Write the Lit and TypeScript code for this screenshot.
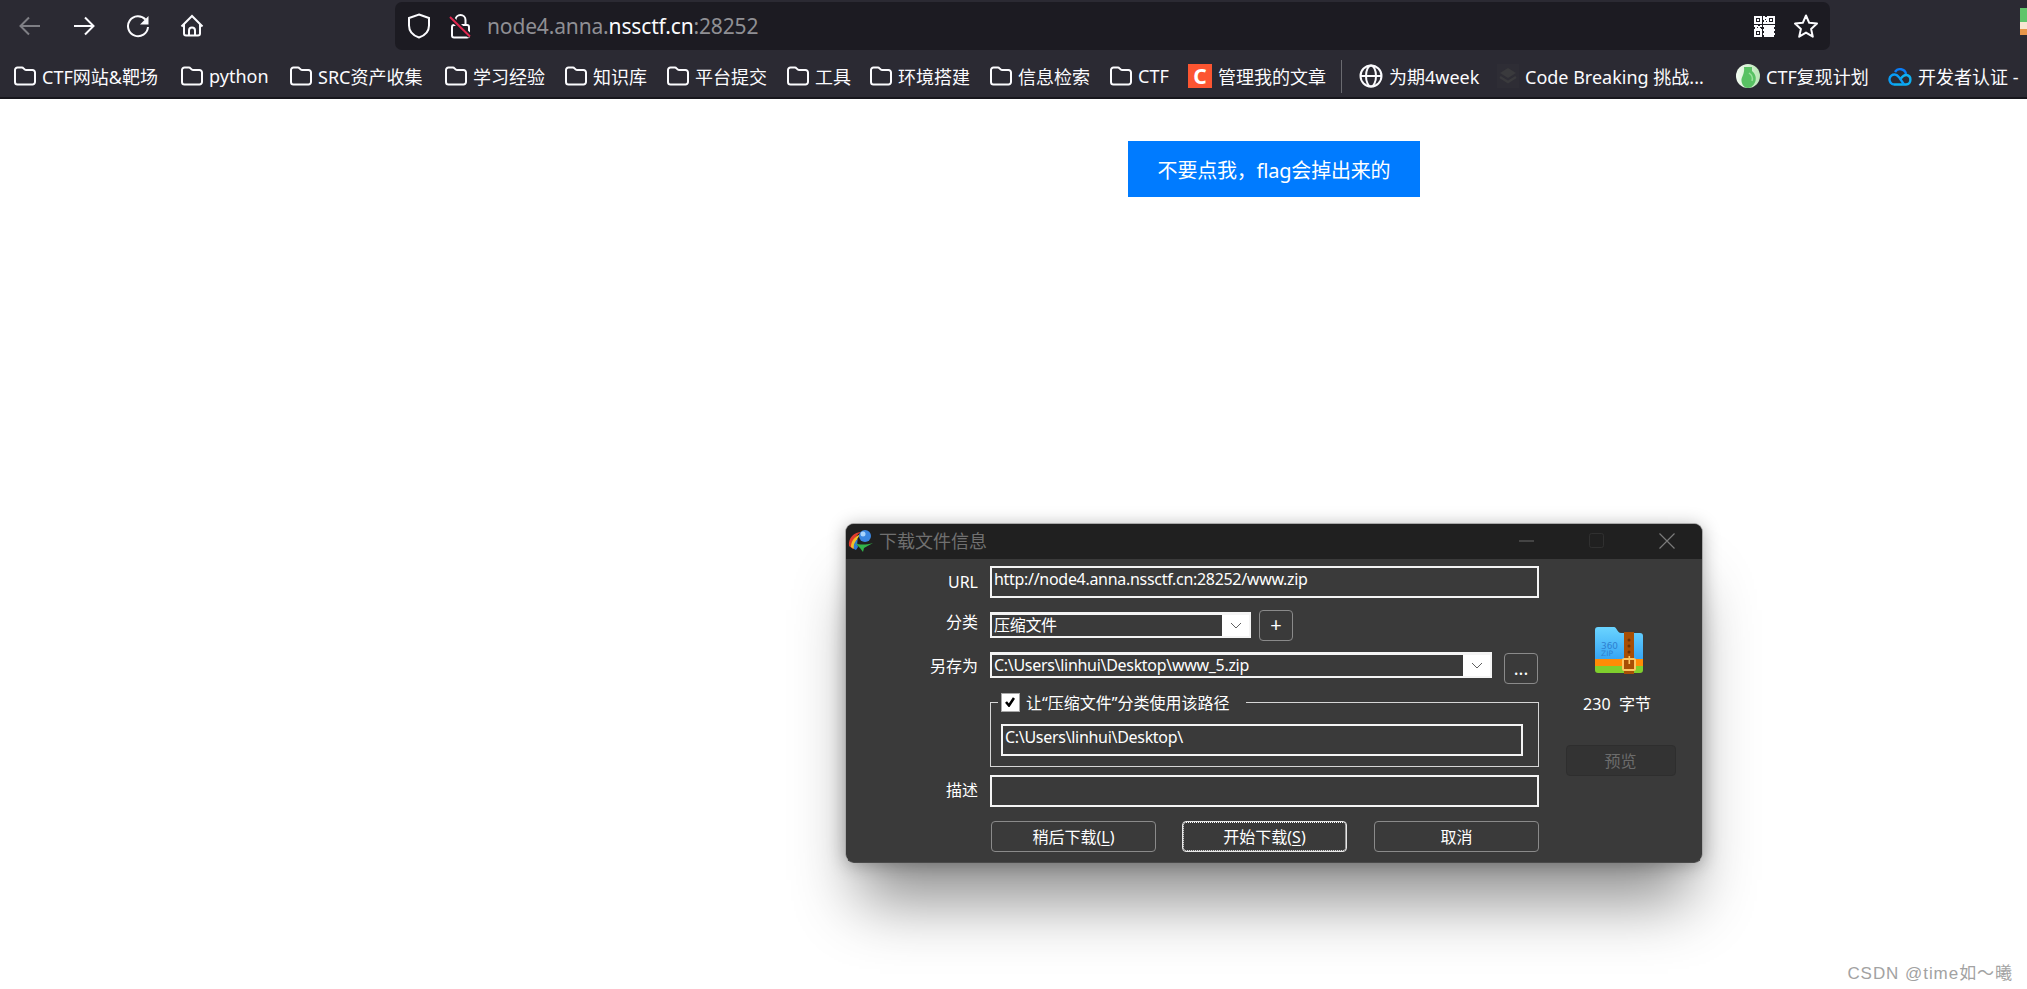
import { LitElement, html, css, svg } from "lit";
import { customElement } from "lit/decorators.js";

type Bm = { label: string; icon: string; w: number };
const BOOKMARKS: Bm[] = [
  { label: "CTF网站&靶场", icon: "folder", w: 167 },
  { label: "python", icon: "folder", w: 109 },
  { label: "SRC资产收集", icon: "folder", w: 155 },
  { label: "学习经验", icon: "folder", w: 120 },
  { label: "知识库", icon: "folder", w: 102 },
  { label: "平台提交", icon: "folder", w: 120 },
  { label: "工具", icon: "folder", w: 83 },
  { label: "环境搭建", icon: "folder", w: 120 },
  { label: "信息检索", icon: "folder", w: 120 },
  { label: "CTF", icon: "folder", w: 78 },
  { label: "管理我的文章", icon: "csdn", w: 153 },
  { label: "为期4week", icon: "globe", w: 138 },
  { label: "Code Breaking 挑战...", icon: "code", w: 239 },
  { label: "CTF复现计划", icon: "jar", w: 152 },
  { label: "开发者认证 -", icon: "cloud", w: 138 },
];

const ICONS: Record<string, unknown> = {
  folder: svg`<svg class="ic" viewBox="0 0 22 20" width="22" height="20" fill="none" stroke="#fbfbfe" stroke-width="2"><path d="M1 4a2.5 2.5 0 0 1 2.5-2.5H8c1.6 0 2 2.5 4 2.5h6.5A2.5 2.5 0 0 1 21 6.5v9.500a2.500 2.500 0 0 1-2.500 2.500h-15A2.500 2.500 0 0 1 1 16z"/></svg>`,
  csdn: html`<span class="csdn">C</span>`,
  globe: svg`<svg class="ic" viewBox="0 0 24 24" width="24" height="24" fill="none" stroke="#fbfbfe" stroke-width="2"><circle cx="12" cy="12" r="10.500"/><ellipse cx="12" cy="12" rx="5" ry="10.500"/><path d="M1.500 12h21"/></svg>`,
  code: svg`<svg class="ic" viewBox="0 0 22 24" width="22" height="24"><rect width="22" height="24" fill="#2e2d35"/><path d="M11 4l8 5-8 5-8-5z" fill="#3a3a3d"/><path d="M3 13l8 5 8-5" fill="none" stroke="#3a3a3d" stroke-width="2.500"/></svg>`,
  jar: svg`<svg class="ic" viewBox="0 0 24 24" width="24" height="24"><defs><linearGradient id="jg" x1="0" y1="0" x2="1" y2="0"><stop offset="0" stop-color="#f3fbf2"/><stop offset="1" stop-color="#b8e6b4"/></linearGradient></defs><circle cx="12" cy="12" r="12" fill="url(#jg)"/><path d="M8 3h8v4c3 2.500 4.500 6 3.500 10-1 3.500-4 7-7.500 7s-6-3-6.500-7C5 13 9 10 8 3z" fill="#58c263"/><path d="M13 9c3 2 4 5 3 8" stroke="#9be29c" stroke-width="1.500" fill="none"/></svg>`,
  cloud: svg`<svg class="ic" viewBox="0 0 24 20" width="24" height="20" fill="none" stroke-width="2.400"><path d="M7 6a6 6 0 0 1 11 2" stroke="#0a7cf5"/><path d="M6 18.500h12a4.800 4.800 0 0 0 .5-9.500c-3-.3-4.500 2-6.500 4.500" stroke="#0fb0f0"/><path d="M6 18.500a5 5 0 1 1 1-10c2.500 0 3.500 2 5 4 1.200 1.700 2.500 4 4 6" stroke="#0a9df5"/></svg>`,
};

@customElement("app-root")
export class AppRoot extends LitElement {
  static styles = css`
    :host {
      display: block;
      position: relative;
      width: 2027px;
      height: 989px;
      overflow: hidden;
      background: #fff;
      font-family: "Noto Sans", "Noto Sans CJK SC", sans-serif;
    }
    .toolbar {
      height: 48px;
      padding-top: 2px;
      padding-left: 3px;
      background: #2b2a33;
      display: flex;
      align-items: stretch;
    }
    .nav {
      width: 54px;
      display: flex;
      align-items: center;
      justify-content: center;
    }
    .urlbar {
      margin-left: 176px;
      width: 1435px;
      box-sizing: border-box;
      background: #1c1b22;
      border-radius: 7px;
      display: flex;
      align-items: center;
      padding: 0 12px;
      color: #fbfbfe;
    }
    .url {
      margin-left: 16px;
      font-size: 21px;
      letter-spacing: -0.15px;
      color: #8f8f94;
      flex: 1;
      white-space: nowrap;
    }
    .url b {
      font-weight: 400;
      color: #fbfbfe;
    }
    .lock {
      margin-left: 18px;
    }
    .qr {
      margin-right: 19px;
    }
    .avatar {
      margin-left: auto;
      align-self: flex-start;
      margin-top: 6px;
    }
    .bookmarks {
      height: 42px;
      padding: 5px 0 0 14px;
      background: #2b2a33;
      border-bottom: 2px solid #17161c;
      display: flex;
      align-items: center;
      color: #fbfbfe;
      font-size: 18px;
      white-space: nowrap;
      overflow: hidden;
    }
    .bm {
      display: flex;
      align-items: center;
      gap: 6px;
      flex: none;
    }
    .ic {
      flex: none;
    }
    .csdn {
      width: 24px;
      height: 24px;
      background: #fc5531;
      color: #fff;
      font: 700 21px/24px "Noto Sans", sans-serif;
      text-align: center;
      flex: none;
    }
    .sep {
      width: 1px;
      height: 33px;
      background: #6a6a70;
      margin-right: 17px;
      flex: none;
    }
    .page {
      padding: 42px 0 0 1128px;
    }
    .cta {
      display: block;
      width: 292px;
      height: 56px;
      border: 0;
      padding: 0;
      background: #007bff;
      color: #fff;
      font: 400 20px "Noto Sans", "Noto Sans CJK SC", sans-serif;
      letter-spacing: -0.2px;
    }
    .dialog {
      position: absolute;
      left: 845px;
      top: 523px;
      width: 858px;
      height: 340px;
      box-sizing: border-box;
      border: 1px solid #a9a9a9;
      border-bottom-color: #4a4a4a;
      border-radius: 9px;
      overflow: hidden;
      background: #3a3a3a;
      color: #fff;
      font-size: 16px;
      display: flex;
      flex-direction: column;
    }
    .shadow {
      position: absolute;
      left: 845px;
      top: 523px;
      width: 858px;
      height: 340px;
      border-radius: 9px;
      box-shadow: 0 52px 60px -14px rgba(0, 0, 0, 0.44), 0 2px 18px rgba(0, 0, 0, 0.28);
    }
    .title {
      height: 35px;
      box-sizing: border-box;
      padding-bottom: 2px;
      flex: none;
      background: #202020;
      display: flex;
      align-items: center;
      color: #707070;
      font-size: 18px;
    }
    .title .logo {
      margin: 0 5px 0 2px;
    }
    .title .name {
      flex: 1;
      margin-bottom: 1px;
    }
    .wc {
      width: 70px;
      display: flex;
      align-items: center;
      justify-content: center;
    }
    .body {
      flex: 1;
      display: flex;
    }
    .form {
      width: 693px;
      flex: none;
      padding-top: 7px;
      display: flex;
      flex-direction: column;
    }
    .row {
      display: grid;
      grid-template-columns: 132px 1fr;
      column-gap: 12px;
      align-items: start;
    }
    .lab {
      text-align: right;
      line-height: 32px;
    }
    .lab.up {
      line-height: 26px;
    }
    .lab.nudge {
      padding-top: 1px;
    }
    .lab.lift {
      margin-top: -1px;
    }
    .mt12 { margin-top: 12px; }
    .mt11 { margin-top: 11px; }
    .mt8 { margin-top: 8px; }
    .mt14 { margin-top: 14px; }
    .input {
      box-sizing: border-box;
      height: 32px;
      border: 2px solid #f4f4f4;
      padding: 0 2px;
      line-height: 22px;
      font-size: 16px;
      white-space: nowrap;
      letter-spacing: -0.3px;
    }
    .ctl {
      display: flex;
      align-items: flex-start;
    }
    .select {
      box-sizing: border-box;
      display: flex;
      background: #fff;
      border: 2px solid #f4f4f4;
      border-top-width: 3px;
      flex: none;
    }
    .select .val {
      flex: 1;
      background: #3a3a3a;
      padding-left: 2px;
      line-height: 21px;
      white-space: nowrap;
      letter-spacing: -0.3px;
    }
    .select .arrow {
      display: flex;
      align-items: center;
      justify-content: center;
      width: 27px;
    }
    .cat { width: 261px; height: 26px; margin-top: 2px; }
    .save { width: 502px; height: 26px; }
    .btn {
      box-sizing: border-box;
      background: #3a3a3a;
      border: 1px solid #8a8a8a;
      border-radius: 4px;
      color: #fff;
      font: 400 16px "Noto Sans", "Noto Sans CJK SC", sans-serif;
      padding: 0 0 2px;
      display: block;
      height: 31px;
    }
    .small { width: 34px; }
    .plus { margin-left: 8px; font-size: 20px; line-height: 26px; }
    .dots { margin-left: 12px; margin-top: 1px; line-height: 22px; font-size: 18px; }
    .group {
      margin-top: 10px;
      height: 65px;
      box-sizing: border-box;
      border: 1px solid #d6d6d6;
      position: relative;
      padding: 21px 15px 0 10px;
    }
    .legend {
      position: absolute;
      left: 7px;
      top: -11px;
      height: 20px;
      background: #3a3a3a;
      padding: 0 16px 0 3px;
      display: flex;
      align-items: center;
      gap: 6px;
      white-space: nowrap;
      font-size: 16px;
    }
    .check {
      width: 19px;
      height: 19px;
      background: #fff;
      border: 1px solid #a8a8a8;
      box-sizing: border-box;
      flex: none;
      display: flex;
      align-items: center;
      padding-left: 3px;
    }
    .actions {
      padding-left: 145px;
      display: flex;
      gap: 26px;
    }
    .actions .btn {
      width: 165px;
    }
    .actions .btn:nth-child(3) {
      margin-left: 1px;
    }
    .actions u {
      text-underline-offset: 2px;
    }
    .focus {
      border-color: #e8e8e8;
      outline: 1px dotted #fff;
      outline-offset: -2px;
    }
    .side {
      flex: 1;
      display: flex;
      flex-direction: column;
      align-items: center;
      padding-top: 68px;
    }
    .side .zip {
      margin-right: 4px;
    }
    .size {
      margin-top: 19px;
      margin-right: 7px;
      line-height: 22px;
      white-space: pre;
    }
    .preview {
      margin-top: 30px;
      width: 110px;
      height: 31px;
      background: #333;
      border-color: #2e2e2e;
      color: #6c6c6c;
    }
    .mark {
      position: absolute;
      right: 14px;
      top: 959px;
      color: #a2a2a2;
      font: 400 17px "Liberation Sans", "Noto Sans CJK SC", sans-serif;
      letter-spacing: 0.95px;
      white-space: nowrap;
    }
  `;

  private qr() {
    const cells = [
      [9, 0], [11, 1], [9, 2], [12, 3], [10, 4], [9, 6], [11, 6],
      [0, 9], [2, 9], [4, 10], [6, 9], [1, 11], [5, 12], [3, 12],
      [9, 9], [11, 9], [13, 9], [15, 9], [17, 9], [19, 9],
      [10, 11], [12, 11], [14, 11], [16, 11], [18, 11],
      [9, 13], [11, 13], [13, 13], [15, 13], [17, 13], [19, 13],
      [10, 15], [12, 15], [14, 15], [16, 15], [18, 15],
      [9, 17], [11, 17], [13, 17], [15, 17], [17, 17], [19, 17],
      [10, 19], [12, 19], [14, 19], [16, 19], [18, 19],
    ];
    return svg`<svg class="qr" viewBox="0 0 21 21" width="21" height="21" fill="#fbfbfe">
      ${[[0, 0], [13, 0], [0, 13]].map(
        ([x, y]) => svg`<path fill-rule="evenodd" d="M${x} ${y}h8v8h-8zM${x + 2} ${y + 2}v4h4v-4z"/><rect x="${x + 3}" y="${y + 3}" width="2" height="2"/>`
      )}
      ${cells.map(([x, y]) => svg`<rect x="${x}" y="${y}" width="2" height="2"/>`)}
    </svg>`;
  }

  render() {
    return html`
      <div class="toolbar">
        <div class="nav">
          <svg viewBox="0 0 24 24" width="24" height="24" fill="none" stroke="#7f7f85" stroke-width="2"><path d="M22 12H3M11 3.500 2.500 12l8.500 8.500"/></svg>
        </div>
        <div class="nav">
          <svg viewBox="0 0 24 24" width="24" height="24" fill="none" stroke="#fbfbfe" stroke-width="2"><path d="M2 12h19M13 3.500l8.500 8.500-8.500 8.500"/></svg>
        </div>
        <div class="nav">
          <svg viewBox="0 0 24 24" width="24" height="24" fill="none" stroke="#fbfbfe" stroke-width="2"><path d="M19.500 5.500A10 10 0 1 0 22 13"/><path d="M22.500 2v8.500H14z" fill="#fbfbfe" stroke="none"/></svg>
        </div>
        <div class="nav">
          <svg viewBox="0 0 24 24" width="24" height="24" fill="none" stroke="#fbfbfe" stroke-width="2"><path d="M1.500 12.500 12 2l10.500 10.500"/><path d="M4 10v9.500a2 2 0 0 0 2 2h12a2 2 0 0 0 2-2V10"/><path d="M9 21.500v-5a3 3 0 0 1 6 0v5"/></svg>
        </div>
        <div class="urlbar">
          <svg viewBox="0 0 24 26" width="24" height="26" fill="none" stroke="#fbfbfe" stroke-width="2"><path d="M12 1.500 22 5v7.500c0 6-4 10-10 12-6-2-10-6-10-12V5z"/></svg>
          <svg class="lock" viewBox="0 0 22 26" width="22" height="26" fill="none" stroke="#fbfbfe" stroke-width="2"><path d="M6.500 12V7a5 5 0 0 1 10 0v5"/><rect x="3" y="12" width="17" height="12.500" rx="2"/><path d="M0 3l21 20" stroke="#1c1b22" stroke-width="5"/><path d="M1 4l20 19.500" stroke="#e22850" stroke-width="2"/></svg>
          <div class="url">node4.anna.<b>nssctf.cn</b>:28252</div>
          ${this.qr()}
          <svg viewBox="0 0 24 24" width="24" height="24" fill="none" stroke="#fbfbfe" stroke-width="2" stroke-linejoin="round"><path d="M12 1.500l3.200 7.300 7.800.8-5.900 5.300 1.700 7.800L12 18.600l-6.800 4.100 1.700-7.800L1 9.600l7.800-.8z"/></svg>
        </div>
        <svg class="avatar" viewBox="0 0 7 27" width="7" height="27"><rect width="7" height="14" fill="#5fc56b"/><rect y="14" width="7" height="7" fill="#f7e6d2"/><rect y="21" width="7" height="6" fill="#e8964a"/></svg>
      </div>
      <div class="bookmarks">
        ${BOOKMARKS.map(
          (b) => html`
            ${b.icon === "globe" ? html`<div class="sep"></div>` : ""}
            <div class="bm" style="width:${b.w}px">
              ${ICONS[b.icon]}<span class="t">${b.label}</span>
            </div>
          `
        )}
      </div>
      <div class="page">
        <button class="cta">不要点我，flag会掉出来的</button>
      </div>

      <div class="shadow"></div>
      <div class="dialog">
        <div class="title">
          <svg class="logo" viewBox="0 0 26 24" width="26" height="24">
            <path d="M1 17C0 9 6 3 14 3 9 5 6 9 6 14l-1 6z" fill="#e23b2c"/>
            <path d="M3 18C3 12 7 7 13 5c-3 3-5 6-5 10l-2 5z" fill="#f0c02a"/>
            <path d="M6 20c-1-4 1-8 4-10-1 3-1 5 0 8l-2 3z" fill="#2f7ad6"/>
            <circle cx="17" cy="7" r="6" fill="#3a86e0"/>
            <circle cx="15" cy="5" r="2.500" fill="#a9d4fb"/>
            <path d="M7 14c4 2 11 2 18 0l-9 5-1 4-3-4z" fill="#32b44a"/>
          </svg>
          <span class="name">下载文件信息</span>
          <div class="wc"><svg width="16" height="16"><path d="M0 8h15" stroke="#686868"/></svg></div>
          <div class="wc"><svg width="16" height="16" fill="none"><rect x=".5" y=".5" width="14" height="14" rx="2" stroke="#303030"/></svg></div>
          <div class="wc"><svg width="16" height="16" fill="none" stroke="#7a7a7a" stroke-width="1.200"><path d="M.5.5l15 15M15.500.5l-15 15"/></svg></div>
        </div>
        <div class="body">
          <div class="form">
            <div class="row">
              <div class="lab">URL</div>
              <div class="input">http://node4.anna.nssctf.cn:28252/www.zip</div>
            </div>
            <div class="row mt12">
              <div class="lab up lift">分类</div>
              <div class="ctl">
                <div class="select cat">
                  <div class="val">压缩文件</div>
                  <div class="arrow"><svg width="12" height="8" fill="none" stroke="#606060"><path d="M1 1l5 5 5-5"/></svg></div>
                </div>
                <button class="btn small plus">+</button>
              </div>
            </div>
            <div class="row mt11">
              <div class="lab up nudge">另存为</div>
              <div class="ctl">
                <div class="select save">
                  <div class="val">C:\\Users\\linhui\\Desktop\\www_5.zip</div>
                  <div class="arrow"><svg width="12" height="8" fill="none" stroke="#606060"><path d="M1 1l5 5 5-5"/></svg></div>
                </div>
                <button class="btn small dots">...</button>
              </div>
            </div>
            <div class="row mt8">
              <div></div>
              <div class="group">
                <div class="legend">
                  <div class="check"><svg width="10" height="10"><path d="M1 5l3 3.500L9 1" fill="none" stroke="#000" stroke-width="2.600"/></svg></div>
                  <span>让“压缩文件”分类使用该路径</span>
                </div>
                <div class="input">C:\\Users\\linhui\\Desktop\\</div>
              </div>
            </div>
            <div class="row mt8">
              <div class="lab lift">描述</div>
              <div class="input"></div>
            </div>
            <div class="actions mt14">
              <button class="btn">稍后下载(<u>L</u>)</button>
              <button class="btn focus">开始下载(<u>S</u>)</button>
              <button class="btn">取消</button>
            </div>
          </div>
          <div class="side">
            <svg class="zip" viewBox="0 0 48 47" width="48" height="47">
              <defs>
                <linearGradient id="zb" x1="0" y1="0" x2="0" y2="1"><stop offset="0" stop-color="#6ad4ff"/><stop offset="1" stop-color="#35a4f4"/></linearGradient>
              </defs>
              <path d="M0 3a3 3 0 0 1 3-3h16c3 0 3 6 7 6h19a3 3 0 0 1 3 3v24H0z" fill="url(#zb)"/>
              <rect y="32" width="48" height="8" fill="#ff8c06"/>
              <path d="M0 39h48v4a3 3 0 0 1-3 3H3a3 3 0 0 1-3-3z" fill="#7fcf2d"/>
              <text x="6" y="22" font-family="DejaVu Sans, sans-serif" font-size="8" fill="#2f80d0" textLength="17" lengthAdjust="spacingAndGlyphs">360</text>
              <text x="6" y="29" font-family="DejaVu Sans, sans-serif" font-size="7.500" fill="#2f80d0" textLength="12" lengthAdjust="spacingAndGlyphs">ZIP</text>
              <rect x="29" y="5" width="10" height="42" fill="#a84f05"/>
              <circle cx="34" cy="13" r="1.500" fill="#6e3203"/>
              <circle cx="34" cy="19" r="1.500" fill="#6e3203"/>
              <circle cx="34" cy="25" r="1.500" fill="#6e3203"/>
              <rect x="28" y="32" width="12" height="11" rx="1" fill="none" stroke="#fdc663" stroke-width="2"/>
              <rect x="33.500" y="29" width="1.600" height="8" fill="#fdc663"/>
            </svg>
            <div class="size">230  字节</div>
            <button class="btn preview">预览</button>
          </div>
        </div>
      </div>
      <div class="mark">CSDN @time如～曦</div>
    `;
  }
}
